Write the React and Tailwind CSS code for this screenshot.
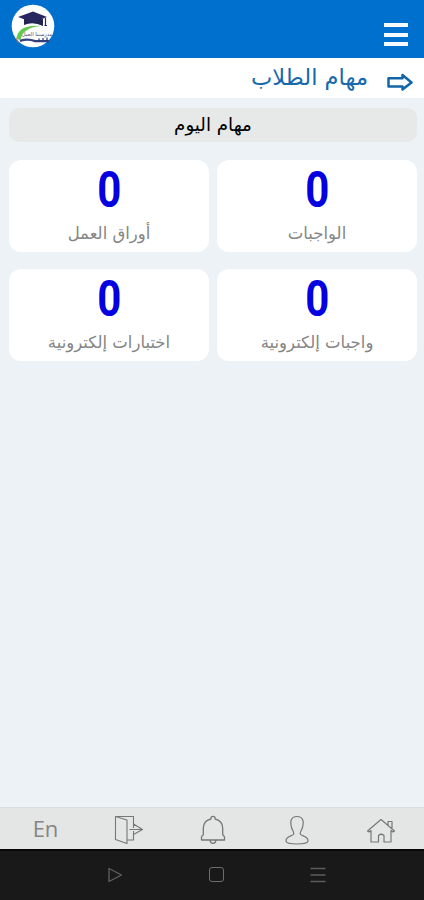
import React from 'react';

const tasks = [
  { label: 'الواجبات', count: 0 },
  { label: 'أوراق العمل', count: 0 },
  { label: 'واجبات إلكترونية', count: 0 },
  { label: 'اختبارات إلكترونية', count: 0 },
];

function Logo() {
  return (
    <svg viewBox="0 0 44 44" className="w-[44px] h-[44px]">
      <circle cx="22" cy="22" r="21.3" fill="#fdfefe" />
      <path d="M13 15v6q9-4 19 1v-7z" fill="#20264f" />
      <path d="M7 13L22 7.500l14 5.500L22 18.500z" fill="#27265f" />
      <path d="M34.500 14v7M33.500 21.500h2.500" stroke="#27265f" strokeWidth="1.200" fill="none" />
      <path d="M5.500 35C6 26 14 20.500 30 22C17 23 11 28 9.500 36z" fill="#62c94a" />
      <path d="M5 33l3 6-2-1z" fill="#e0524c" />
      <text x="26" y="32" textAnchor="middle" fontSize="5.200" fontFamily="DejaVu Sans, sans-serif" fill="#35507a" direction="rtl">مدرستنا الجيل</text>
      <path d="M9 36.800q8-2.500 15 .3h14" stroke="#35407a" strokeWidth="2.400" fill="none" />
      <path d="M28 34.500v3M32 34v3M36 33.500v3.500" stroke="#28366e" strokeWidth="1.200" />
    </svg>
  );
}

function TaskCard({ label, count }) {
  return (
    <div className="h-[92px] rounded-xl bg-white flex flex-col items-center">
      <div className="h-[58px] leading-[60px] text-[50px] font-bold text-[#0500e0] font-[Roboto,sans-serif] scale-x-[.84] pl-[1px]">{count}</div>
      <div className="h-[32px] leading-[32px] text-[16.5px] text-[#858585] whitespace-nowrap">{label}</div>
    </div>
  );
}

export default function App() {
  return (
    <div dir="rtl" className="w-[424px] h-[900px] flex flex-col overflow-hidden bg-[#edf2f6] font-['DejaVu_Sans',sans-serif]">
      <header className="h-[58px] shrink-0 bg-[#0070cf] flex justify-between pr-[16px] pl-[11px]">
        <button className="flex flex-col gap-[5.5px] pt-[23px]">
          <span className="w-[24px] h-[4px] bg-[#f4faff]" />
          <span className="w-[24px] h-[4px] bg-[#f4faff]" />
          <span className="w-[24px] h-[4px] bg-[#f4faff]" />
        </button>
        <div className="pt-[4px]">
          <Logo />
        </div>
      </header>

      <div className="h-[40px] shrink-0 bg-white flex pr-[11px]">
        <svg viewBox="0 0 26 18" className="w-[26px] h-[18px] mt-[15px]" fill="none" stroke="#1266a8" strokeWidth="2.500" strokeLinejoin="round">
          <path d="M1.500 5.200H15.500V2L24.500 9.500L15.500 16.500V13.500H1.500z" />
        </svg>
        <h1 className="mr-[19px] leading-[39px] text-[22.6px] text-[#1769ad] whitespace-nowrap">مهام الطلاب</h1>
      </div>

      <main className="flex-1 pt-[10px] pr-[7px] pl-[9px]">
        <div className="h-[34px] leading-[34px] rounded-[10px] bg-[#e7e8e8] text-center text-[18.3px] text-black">مهام اليوم</div>
        <div className="grid grid-cols-2 gap-x-2 gap-y-[17px] mt-[18px]">
          {tasks.map((t) => (
            <TaskCard key={t.label} label={t.label} count={t.count} />
          ))}
        </div>
      </main>

      {/* bottom tabs */}
      <nav dir="ltr" className="h-[42px] shrink-0 bg-[#e4e5e5] border-t border-[#d9dcde] flex pl-[4px]">
        <div className="w-[83px] text-center leading-[40px] text-[22px] text-[#858585] font-['Open_Sans',sans-serif]">En</div>
        <div className="w-[84px] pt-[7px] flex justify-center">
          <svg viewBox="0 0 30 30" className="w-[30px] h-[30px]" fill="none" stroke="#777" strokeWidth="1.100" strokeLinejoin="round">
            <path d="M1.500 1.500L13 5V28.500L1.500 24.500zM1.500 1.500H19.500V9M19.500 19V25H13M15.500 14.500H28M19.500 9L28.500 14.500L19.500 19.500M19.500 9V13M19.500 16V20" />
          </svg>
        </div>
        <div className="w-[84px] pt-[7px] flex justify-center">
          <svg viewBox="0 0 30 30" className="w-[30px] h-[30px]" fill="none" stroke="#777" strokeWidth="1.300" strokeLinejoin="round">
            <path d="M13 4C12 .5 18 .5 17 4C22 5 24.500 8.500 24.700 13V19.500C24.700 20.500 26.500 21 26.500 22V25H3.500V22C3.500 21 5.300 20.500 5.300 19.500V13C5.500 8.500 8 5 13 4zM12 25C12.500 29.500 17.500 29.500 18 25" />
          </svg>
        </div>
        <div className="w-[84px] pt-[7px] flex justify-center">
          <svg viewBox="0 0 30 30" className="w-[30px] h-[30px]" fill="none" stroke="#777" strokeWidth="1.200">
            <path d="M15 1.500C8 1.500 8.500 8 9 10C9.300 15 12 15.500 11.800 19C11.500 21 4 20.500 4 26C4 30 26 30 26 26C26 20.500 18.500 21 18.200 19C18 15.500 20.700 15 21 10C21.500 8 22 1.500 15 1.500z" />
          </svg>
        </div>
        <div className="w-[84px] pt-[7px] flex justify-center">
          <svg viewBox="0 0 30 30" className="w-[30px] h-[30px]" fill="none" stroke="#777" strokeWidth="1.200" strokeLinejoin="round">
            <path d="M1.500 16L15 4.500L28.500 16L26.800 17L25 15.500V27H18V20.500Q15 18 12.500 20.500V27H5V15.500L3.200 17zM22 10V6.500H26V14" />
          </svg>
        </div>
      </nav>

      {/* system navigation */}
      <div dir="ltr" className="h-[51px] shrink-0 bg-[#191919] border-t-2 border-[#080808] flex items-center justify-center gap-[86px] pl-[9px] pb-[2px]">
        <svg viewBox="0 0 16 16" className="w-[16px] h-[16px]" fill="none" stroke="#616161" strokeWidth="1.300" strokeLinejoin="round">
          <path d="M2 1.500L14.500 8L2 14.500z" />
        </svg>
        <span className="w-[15px] h-[15px] rounded-[3px] border border-[#6d6d6d]" />
        <svg viewBox="0 0 16 16" className="w-[16px] h-[16px]" stroke="#5c5c5c" strokeWidth="1.500">
          <path d="M.5 1.500H15.500M.5 8H15.500M.5 14.500H15.500" />
        </svg>
      </div>
    </div>
  );
}
